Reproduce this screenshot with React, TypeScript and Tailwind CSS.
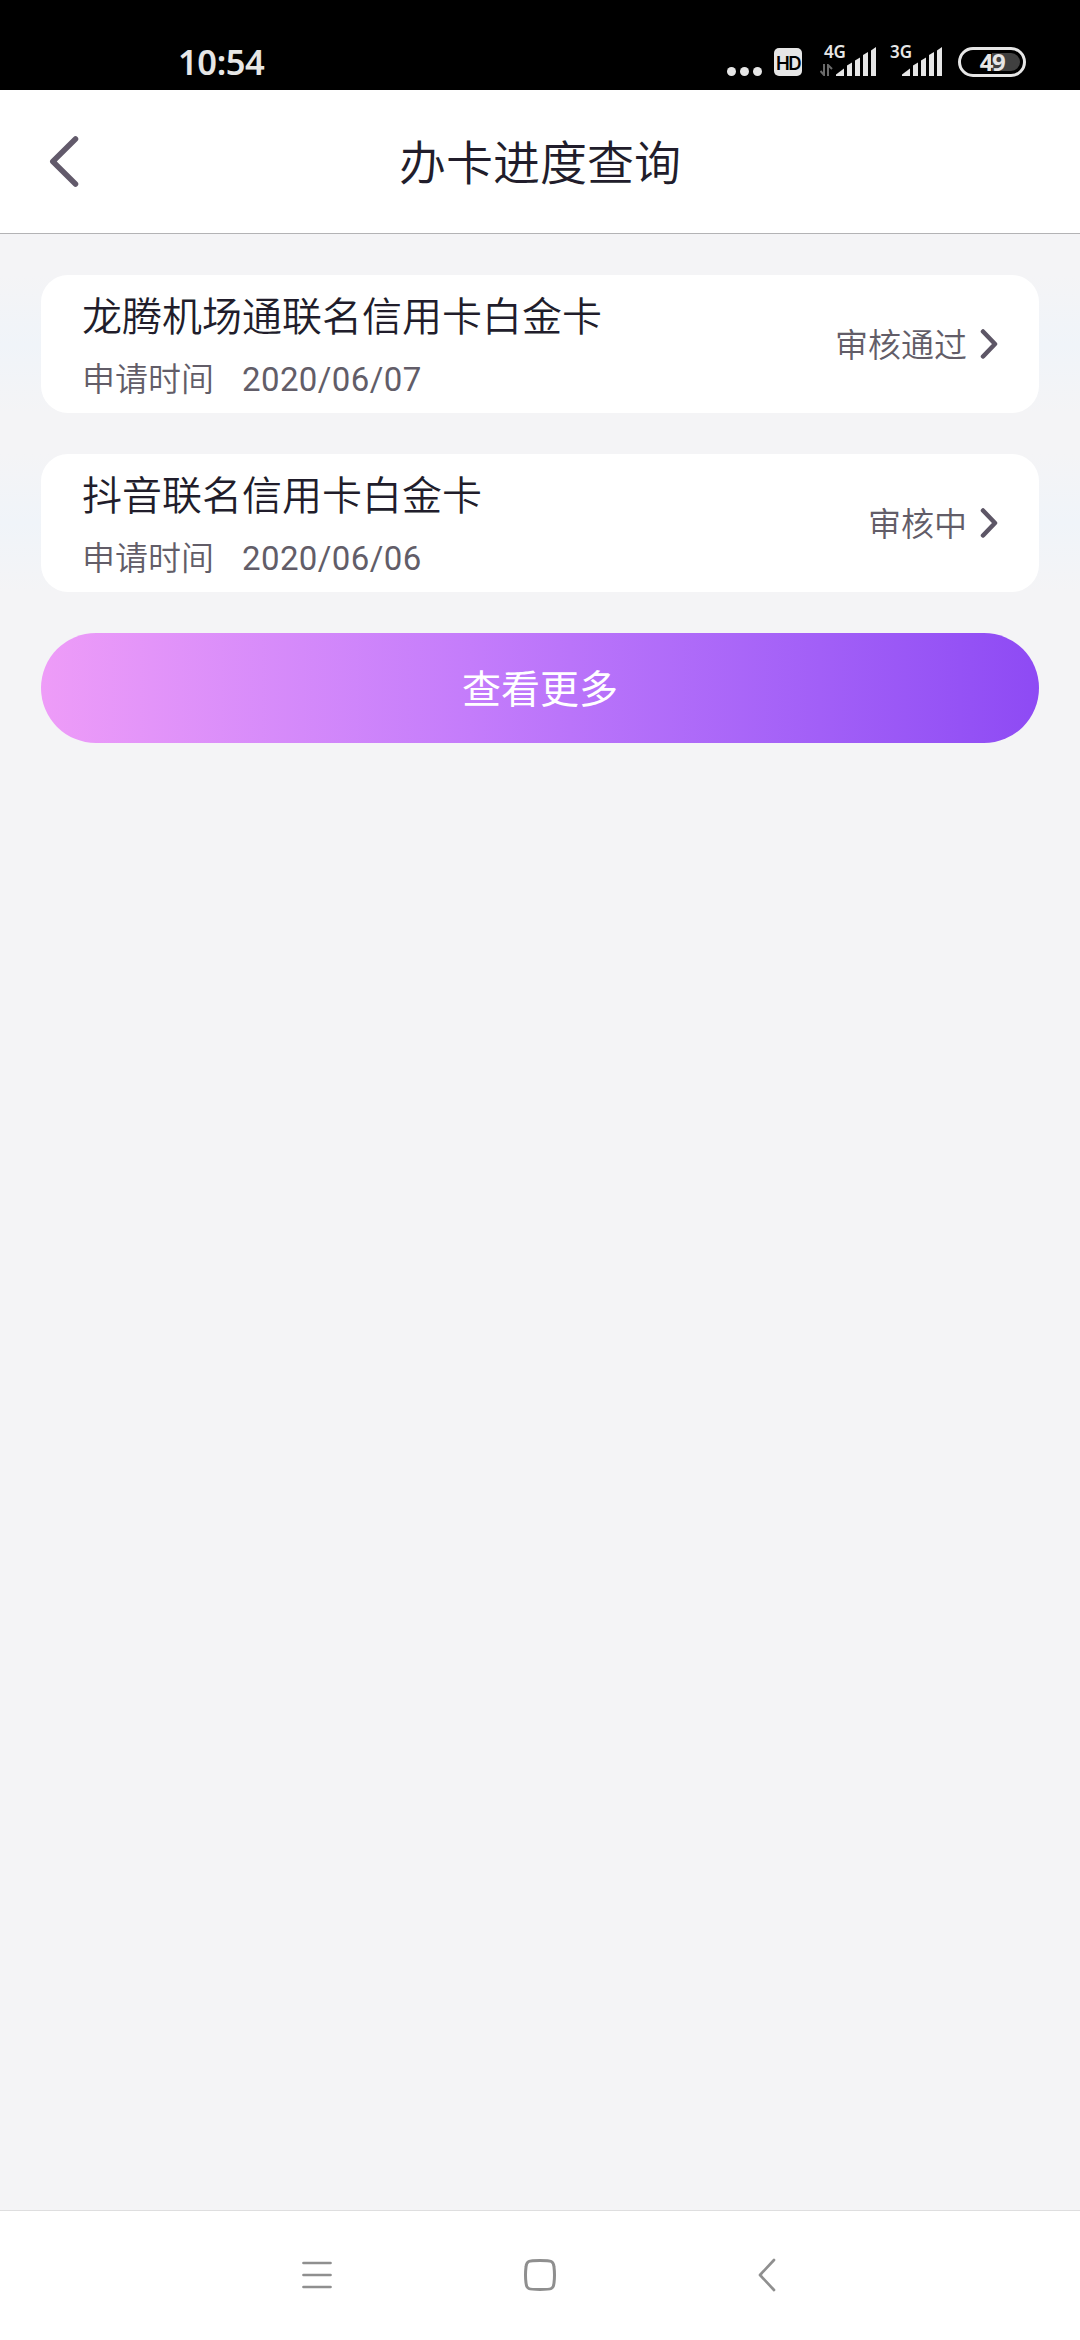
import React from "react";

const records = [
  { name: "龙腾机场通联名信用卡白金卡", date: "2020/06/07", status: "审核通过" },
  { name: "抖音联名信用卡白金卡", date: "2020/06/06", status: "审核中" }
];

const SignalBars = () => (
  <svg width="42" height="30" viewBox="0 0 42 30" fill="#e6e6e6">
    <path d="M0 29 V27.5 L8 21.5 V29 Z" />
    <path d="M11 29 V18.5 L16 15.5 V29 Z" />
    <path d="M19 29 V13.5 L24 10.5 V29 Z" />
    <path d="M27 29 V8 L32 5 V29 Z" />
    <path d="M35 29 V3.5 L40 0 V29 Z" />
  </svg>
);

const StatusBar = () => (
  <div className="h-[90px] bg-black text-[#e6e6e6] flex items-start font-['Noto_Sans',sans-serif]">
    <div className="pl-[178px] pt-[38px] text-[34.5px] leading-[48px] font-semibold tracking-[-0.4px] w-[727px] shrink-0">10:54</div>

    <div className="flex gap-[4px] pt-[67px]">
      <span className="size-[9px] rounded-full bg-[#e6e6e6]" />
      <span className="size-[9px] rounded-full bg-[#e6e6e6]" />
      <span className="size-[9px] rounded-full bg-[#e6e6e6]" />
    </div>

    <div className="mt-[48px] ml-[12px] w-[28px] h-[28px] rounded-[5px] bg-[#e6e6e6] text-black text-[18.5px] leading-[30px] font-semibold flex justify-center tracking-[-1.5px] font-[Inter,sans-serif]">
      HD
    </div>

    <div className="relative mt-[47px] ml-[34px] w-[42px]">
      <span className="absolute -left-[12px] -top-[5px] text-[17px] leading-[20px] font-semibold tracking-[-0.3px]">4G</span>
      <svg className="absolute -left-[16px] top-[17px]" width="13" height="12" viewBox="0 0 13 12" fill="none" stroke="#6b6b6b" strokeWidth="2">
        <path d="M4 0 V11 L0.5 7" />
        <path d="M8 12 V1 L12 5" />
      </svg>
      <SignalBars />
    </div>

    <div className="relative mt-[47px] ml-[24px] w-[42px]">
      <span className="absolute -left-[12px] -top-[5px] text-[17px] leading-[20px] font-semibold">3G</span>
      <SignalBars />
    </div>

    <div className="mt-[47px] ml-[14px] w-[68px] h-[30px] rounded-full border-[3px] border-[#e6e6e6] p-[3px]">
      <div className="h-full rounded-full bg-linear-to-r from-black from-50% to-[#404040] to-50% flex items-center justify-center text-[24px] leading-none font-bold tracking-[-1.5px]">
        49
      </div>
    </div>
  </div>
);

const Header = () => (
  <header className="h-[144px] bg-white border-b border-[#b3b3b5] grid grid-cols-3 items-center px-[48px]">
    <svg width="32" height="52" viewBox="0 0 32 52" fill="none" stroke="#625a6b" strokeWidth="5.5" strokeLinecap="round" strokeLinejoin="round">
      <path d="M27.5 3 L4.8 25.5 L27.5 48" />
    </svg>
    <h1 className="pt-[4px] text-[47px] leading-[60px] text-[#211d2b] text-center whitespace-nowrap">办卡进度查询</h1>
  </header>
);

const RecordCard = ({ name, date, status }: { name: string; date: string; status: string }) => (
  <div className="bg-linear-to-b from-[#f4f4f6] via-[#f0f4f9] to-[#f4f4f6] px-[41px]">
    <div className="h-[138px] bg-white rounded-[27px] px-[41px] flex items-center justify-between">
      <div className="pt-[10px]">
        <p className="text-[40px] leading-[62px] text-[#211d2b]">{name}</p>
        <p className="text-[33px] leading-[62px] text-[#625d68] flex gap-[28px]">
          <span>申请时间</span>
          <span className="tracking-[0.4px] font-normal">{date}</span>
        </p>
      </div>
      <div className="flex items-center gap-[13px] text-[33px] text-[#625d68]">
        <span className="pt-[3px]">{status}</span>
        <svg width="18" height="32" viewBox="0 0 18 32" fill="none" stroke="#5d5666" strokeWidth="4.5" strokeLinecap="round" strokeLinejoin="round">
          <path d="M3 3.5 L15 16 L3 28.5" />
        </svg>
      </div>
    </div>
  </div>
);

const NavigationBar = () => (
  <nav className="h-[130px] bg-white border-t border-[#dededf] flex items-center pb-[2px] text-[#8f8f8f]">
    <svg className="ml-[302px]" width="30" height="30" viewBox="0 0 30 30" stroke="currentColor" strokeWidth="2.7" strokeLinecap="round">
      <path d="M1.5 3 H28.5 M1.5 15 H28.5 M1.5 27 H28.5" />
    </svg>
    <svg className="ml-[192px]" width="32" height="32" viewBox="0 0 32 32" fill="none" stroke="currentColor" strokeWidth="3">
      <path d="M16 1.5 C28 1.5 29.5 2 30 8 Q31 16 30 24 C29.5 30 28 30.5 16 30.5 C4 30.5 2.5 30 2 24 Q1 16 2 8 C2.5 2 4 1.5 16 1.5 Z" />
    </svg>
    <svg className="ml-[202px]" width="18" height="34" viewBox="0 0 18 34" fill="none" stroke="currentColor" strokeWidth="2.7" strokeLinecap="round" strokeLinejoin="round">
      <path d="M16 2 L2 17 L16 32" />
    </svg>
  </nav>
);

const App = () => {
  return (
    <div className="w-[1080px] h-[2340px] bg-[#f4f4f6] flex flex-col font-[Roboto,'Noto_Sans_CJK_SC',sans-serif] font-[350]">
      <StatusBar />
      <Header />

      <main className="flex-1 pt-[41px] flex flex-col gap-[41px]">
        {records.map((record, i) => (
          <RecordCard key={i} {...record} />
        ))}

        <button className="mx-[41px] h-[110px] pt-[5px] rounded-full bg-linear-to-r from-[#ee9cf8] via-[#c47cfb] via-43% to-[#8e4af4] text-[39px] font-normal text-white cursor-pointer">
          查看更多
        </button>
      </main>

      <NavigationBar />
    </div>
  );
};

export default App;
